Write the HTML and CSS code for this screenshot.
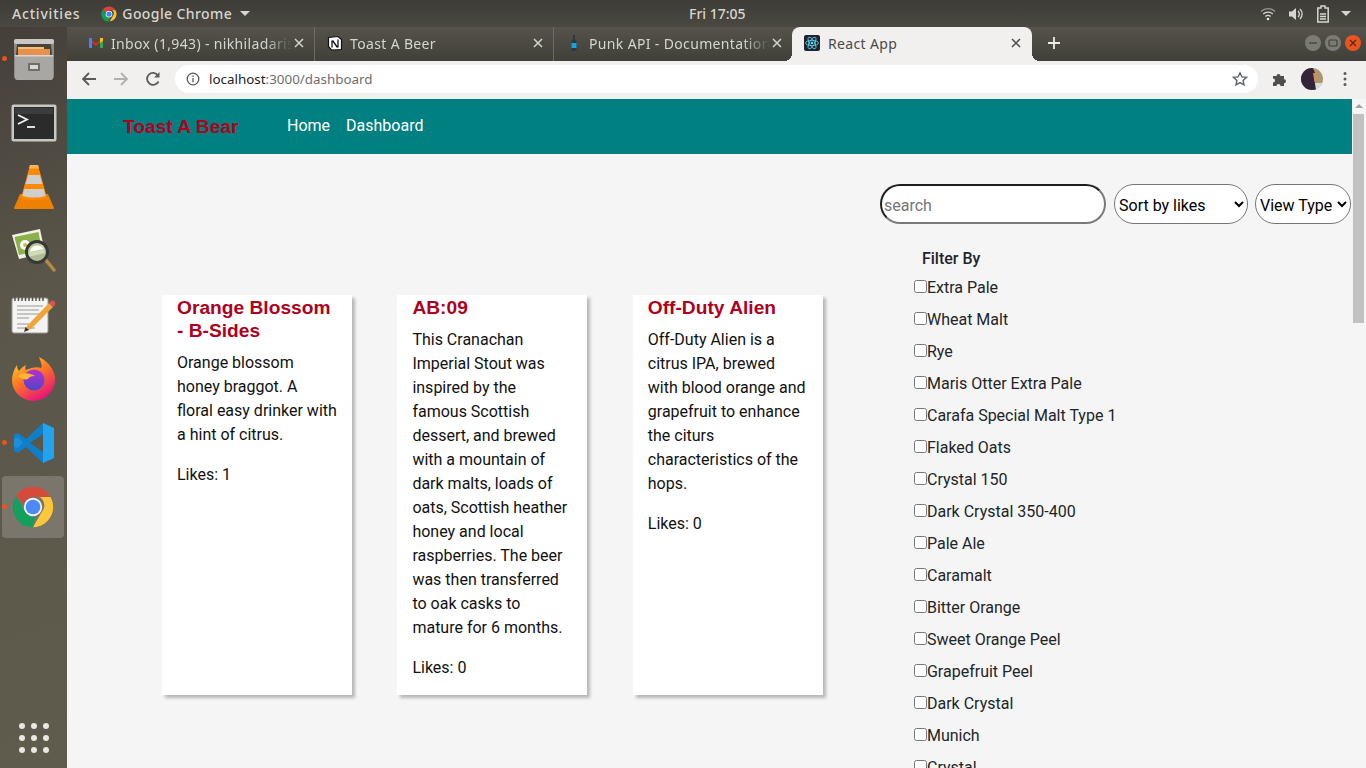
FILE: index.html
```html
<!DOCTYPE html>
<html lang="en">
<head>
  <meta charset="UTF-8">
  <title>React App</title>
  <link rel="stylesheet" href="styles.css">
</head>
<body>
  <div class="topbar">
    <span class="activities">Activities</span>
    <span class="app-menu">
      <svg width="18" height="18" viewBox="0 0 48 48"><path d="M24 4a20 20 0 0 1 17.3 10H24a10 10 0 0 0-9.6 7.2L7.6 11.9A20 20 0 0 1 24 4z" fill="#db4437"/><path d="M41.3 14A20 20 0 0 1 25.6 44l8.9-15.2A10 10 0 0 0 32 14z" fill="#fbc02d"/><path d="M7.6 11.9l8.7 15a10 10 0 0 0 11.2 6.5L22.400 44A20 20 0 0 1 7.600 11.900z" fill="#0f9d58"/><circle cx="24" cy="24" r="9" fill="#fff"/><circle cx="24" cy="24" r="7" fill="#4285f4"/></svg>
      <span class="app-name">Google Chrome</span>
      <i class="caret"></i>
    </span>
    <span class="clock">Fri 17:05</span>
    <span class="tray">
      <svg width="16" height="16" viewBox="0 0 16 16" fill="none" stroke="#d8d6cf" stroke-width="1.400"><path d="M1 5.500a10 10 0 0 1 14 0" opacity=".55"/><path d="M3.200 8a7 7 0 0 1 9.600 0"/><path d="M5.400 10.500a3.700 3.700 0 0 1 5.200 0"/><circle cx="8" cy="13" r="1.300" fill="#e8e6df" stroke="none"/></svg>
      <svg width="16" height="16" viewBox="0 0 16 16" fill="none" stroke="#d8d6cf" stroke-width="1.300"><path d="M1 5.500h3L8 2v12l-4-3.500H1z" fill="#d8d6cf" stroke="none"/><path d="M10 5a4 4 0 0 1 0 6"/><path d="M12 3a7 7 0 0 1 0 10"/></svg>
      <svg width="14" height="18" viewBox="0 0 14 18" fill="none" stroke="#d8d6cf" stroke-width="1.500"><path d="M5 1h4v2h3.200v14H1.800V3H5z"/><path d="M4 9h6M4 11.500h6M4 14h6" stroke-width="1.400"/></svg>
      <i class="caret"></i>
    </span>
  </div>

  <div class="desktop">
    <nav class="dock">
      <div class="dock-item running">
        <svg width="42" height="46" viewBox="0 0 42 46"><rect x="1" y="3" width="40" height="40" rx="3" fill="#8d8c88"/><rect x="1" y="3" width="40" height="5" rx="2" fill="#c9c8c4"/><path d="M4 8h34l1 11H3z" fill="#4b4238"/><path d="M5 13h32v6H5z" fill="#e8914a"/><path d="M5 11h26v2H5z" fill="#f3c07a"/><path d="M2 19h38v23a2 2 0 0 1-2 2H4a2 2 0 0 1-2-2z" fill="#a8a7a3"/><path d="M2 19h38v1.500H2z" fill="#d8d7d3"/><rect x="15" y="27" width="12" height="8" rx="1" fill="#6e6d69"/><rect x="17" y="29" width="8" height="4" fill="#d9d8d4"/></svg>
      </div>
      <div class="dock-item">
        <svg width="46" height="38" viewBox="0 0 46 38"><rect x="0.500" y="0.500" width="45" height="37" rx="2" fill="#c7c7c4"/><rect x="3" y="3" width="40" height="32" fill="#2b2b2b"/><rect x="4" y="4" width="38" height="6" fill="#3c3c3c"/><path d="M7 11l9 4.500-9 4.500" fill="none" stroke="#f3f3f3" stroke-width="1.800"/><path d="M16 23h8" stroke="#f3f3f3" stroke-width="1.800"/></svg>
      </div>
      <div class="dock-item">
        <svg width="40" height="46" viewBox="0 0 40 46"><path d="M6 30h28l6 14a1 1 0 0 1-1 1H1a1 1 0 0 1-1-1z" fill="#ee8200"/><path d="M16 1h8l9 33q-13 4-26 0z" fill="#ff8a00"/><path d="M14.200 11h11.600l2.500 9H11.700z" fill="#cfcfcf"/><path d="M10.300 25h19.400l1.900 7q-11.600 3-23.200 0z" fill="#cfcfcf"/><path d="M16 1h8l1 3.500H15z" fill="#ffb45c"/></svg>
      </div>
      <div class="dock-item">
        <svg width="46" height="46" viewBox="0 0 46 46"><path d="M1 7L29 1l5 24-26 6z" fill="#f1f3e6"/><path d="M3.500 9L27.500 4l3.500 18-23 5z" fill="#8cb04a"/><circle cx="14" cy="17" r="5" fill="#fff"/><circle cx="14" cy="17" r="2" fill="#d7b73c"/><path d="M34 31l9 11" stroke="#b58a45" stroke-width="3.500" stroke-linecap="round"/><circle cx="26" cy="24" r="10.500" fill="#c9d6a8" fill-opacity=".8" stroke="#36393a" stroke-width="3"/><path d="M19 24a7 7 0 0 1 13-3z" fill="#fff"/></svg>
      </div>
      <div class="dock-item">
        <svg width="46" height="38" viewBox="0 0 46 38"><rect x="1" y="2" width="36" height="35" rx="2" fill="#f4f4f2" stroke="#9b9a96"/><path d="M4 0v5M7.500 0v5M11 0v5M14.500 0v5M18 0v5M21.500 0v5M25 0v5M28.500 0v5M32 0v5" stroke="#55544f" stroke-width="1.500"/><path d="M6 10h26M6 14h22M6 18h24M6 22h12M6 28h12M6 32h18" stroke="#b8b7b3" stroke-width="1.300"/><path d="M16 30L38 7l4 4-22 22-6 2z" fill="#f2a33a"/><path d="M38 7l2-2q2-1 3.500.5t.5 3.500l-2 2z" fill="#d9534f"/><path d="M13 36l1.500-5 3.500 3z" fill="#333"/></svg>
      </div>
      <div class="dock-item">
        <svg width="44" height="46" viewBox="0 0 44 46"><defs><linearGradient id="fox" x1="0" y1="0" x2="0.600" y2="1"><stop offset="0" stop-color="#ffdd33"/><stop offset=".5" stop-color="#ff7a22"/><stop offset="1" stop-color="#e8157a"/></linearGradient><linearGradient id="fox2" x1="0" y1="0" x2="0" y2="1"><stop offset="0" stop-color="#b62fd1"/><stop offset="1" stop-color="#4f46c8"/></linearGradient></defs><path d="M27 1c6 3 14 9 16 20a22 22 0 0 1-21 24C9 45 0 35 0 24c0-5 2-11 5-15 0 3 1 5 2 6 2-3 5-5 7-6-1 2-1 4 0 5 4-2 11-4 15-2C31 9 28 5 27 1z" fill="url(#fox)"/><circle cx="22" cy="24" r="10.500" fill="url(#fox2)"/><path d="M6 20c5-4 12-3 17 0-4 0-6 1-7 3-3 1-7 0-10-3z" fill="#ffb52e"/></svg>
      </div>
      <div class="dock-item running">
        <svg width="42" height="42" viewBox="0 0 42 42"><path d="M30 1l11 5v30l-11 5-17-16-8 6-4-2v-16l4-2 8 6z" fill="#0e7fc8"/><path d="M30 1l11 5v30l-11 5z" fill="#23a3ee"/><path d="M30 12L17 21l13 9z" fill="#5a5749"/><path d="M5 15l-4 2 0 8 4 1 5-5z" fill="#1b8fd8"/></svg>
      </div>
      <div class="dock-item active running">
        <svg width="44" height="44" viewBox="0 0 48 48"><path d="M24 2a22 22 0 0 1 19 11H24a11 11 0 0 0-10.500 7.800L5.500 12A22 22 0 0 1 24 2z" fill="#d64a3a"/><path d="M43 13A22 22 0 0 1 24 46l9.500-16.500A11 11 0 0 0 31.500 13z" fill="#fcc73a"/><path d="M5.500 12l9 15.600a11 11 0 0 0 11.800 7L24 46A22 22 0 0 1 5.500 12z" fill="#12a05c"/><circle cx="24" cy="24" r="10" fill="#f1f3f4"/><circle cx="24" cy="24" r="8" fill="#4c8bf5"/></svg>
      </div>
      <div class="app-grid">
        <i></i><i></i><i></i><i></i><i></i><i></i><i></i><i></i><i></i>
      </div>
    </nav>

    <div class="browser">
      <div class="tabstrip">
        <div class="tab">
          <svg class="favicon" width="16" height="16" viewBox="0 0 16 16"><path d="M1 3l7 5.500L15 3v10h-3V7.500L8 11 4 7.500V13H1z" fill="#d93025"/><path d="M1 3h3v10H1z" fill="#4285f4"/><path d="M12 3h3v10h-3z" fill="#34a853"/><path d="M12 3l3 0v3l-3 2z" fill="#fbbc04"/></svg>
          <span class="tab-title">Inbox (1,943) - nikhiladaris</span>
          <svg class="tab-close" width="14" height="14" viewBox="0 0 14 14"><path d="M3 3l8 8M11 3l-8 8" stroke="currentColor" stroke-width="1.500"/></svg>
        </div>
        <div class="tab">
          <svg class="favicon" width="16" height="16" viewBox="0 0 16 16"><path d="M1.500 2.500L11 1.500l3.500 3v10l-10 .5-3-3.500z" fill="#fff" stroke="#111" stroke-width="1.200"/><path d="M5 5.500v7M5.500 5.500l5 7M11 4.500v8" stroke="#111" stroke-width="1.300" fill="none"/></svg>
          <span class="tab-title">Toast A Beer</span>
          <svg class="tab-close" width="14" height="14" viewBox="0 0 14 14"><path d="M3 3l8 8M11 3l-8 8" stroke="currentColor" stroke-width="1.500"/></svg>
        </div>
        <div class="tab">
          <svg class="favicon" width="16" height="16" viewBox="0 0 16 16"><path d="M7 0h2v4l1.500 2v10h-5V6L7 4z" fill="#2c3a40"/><path d="M5.500 8h5v5h-5z" fill="#10a5dd"/></svg>
          <span class="tab-title">Punk API - Documentation</span>
          <svg class="tab-close" width="14" height="14" viewBox="0 0 14 14"><path d="M3 3l8 8M11 3l-8 8" stroke="currentColor" stroke-width="1.500"/></svg>
        </div>
        <div class="tab tab-active">
          <svg class="favicon" width="16" height="16" viewBox="0 0 16 16"><rect width="16" height="16" rx="2" fill="#20232a"/><g fill="none" stroke="#61dafb" stroke-width=".8"><ellipse cx="8" cy="8" rx="6.500" ry="2.600"/><ellipse cx="8" cy="8" rx="6.500" ry="2.600" transform="rotate(60 8 8)"/><ellipse cx="8" cy="8" rx="6.500" ry="2.600" transform="rotate(120 8 8)"/></g><circle cx="8" cy="8" r="1.300" fill="#61dafb"/></svg>
          <span class="tab-title">React App</span>
          <svg class="tab-close" width="14" height="14" viewBox="0 0 14 14"><path d="M3 3l8 8M11 3l-8 8" stroke="currentColor" stroke-width="1.500"/></svg>
        </div>
        <svg class="new-tab" width="14" height="14" viewBox="0 0 14 14"><path d="M7 1v12M1 7h12" stroke="#eeece6" stroke-width="1.800"/></svg>
        <div class="window-buttons">
          <span class="win-btn"><svg width="10" height="10" viewBox="0 0 10 10"><path d="M1 5h8" stroke="#3d3c37" stroke-width="1.200"/></svg></span>
          <span class="win-btn"><svg width="10" height="10" viewBox="0 0 10 10"><rect x="1" y="2" width="8" height="6" rx="1" fill="none" stroke="#3d3c37" stroke-width="1.100"/></svg></span>
          <span class="win-btn win-close"><svg width="10" height="10" viewBox="0 0 10 10"><path d="M2 2l6 6M8 2l-6 6" stroke="#5d2410" stroke-width="1.200"/></svg></span>
        </div>
      </div>

      <div class="toolbar">
        <svg class="tool" width="16" height="16" viewBox="0 0 16 16" fill="none" stroke="#5a5a5a" stroke-width="1.800"><path d="M15 8H2M8 2L2 8l6 6"/></svg>
        <svg class="tool" width="16" height="16" viewBox="0 0 16 16" fill="none" stroke="#b0b0b0" stroke-width="1.800"><path d="M1 8h13M8 2l6 6-6 6"/></svg>
        <svg class="tool" width="16" height="16" viewBox="0 0 16 16" fill="none" stroke="#5a5a5a" stroke-width="1.800"><path d="M13.500 10.500A6 6 0 1 1 13 4.500"/><path d="M14.500 1v5.500H9z" fill="#5a5a5a" stroke="none"/></svg>
        <div class="omnibox">
          <svg width="14" height="14" viewBox="0 0 14 14" fill="none" stroke="#5a5a5a" stroke-width="1.300"><circle cx="7" cy="7" r="5.800"/><path d="M7 6v4.200M7 3.500v1.400"/></svg>
          <span class="url"><b>localhost</b>:3000/dashboard</span>
          <svg class="star" width="16" height="16" viewBox="0 0 16 16"><path d="M8 1.800l1.900 4.100 4.500.5-3.300 3 .9 4.500L8 11.600l-4 2.300.9-4.500-3.300-3 4.500-.5z" fill="none" stroke="#5f6368" stroke-width="1.400"/></svg>
        </div>
        <svg class="puzzle" width="16" height="16" viewBox="0 0 16 16"><path d="M1 5h3.500a2 2 0 1 1 4 0H12v3.300a2 2 0 1 1 0 4V15H8.500a2 2 0 1 0-4 0H1v-3.500a2 2 0 1 0 0-4z" fill="#4f4f4f"/></svg>
        <svg class="avatar" width="22" height="22" viewBox="0 0 22 22"><defs><clipPath id="round"><circle cx="11" cy="11" r="11"/></clipPath></defs><g clip-path="url(#round)"><rect width="22" height="22" fill="#a89a6c"/><path d="M0 0h12l2 5-1 7 3 10H0z" fill="#33243a"/><path d="M12 5h4l1 6-3 3-1-3z" fill="#c98f62"/><path d="M14 15h8v7h-7z" fill="#d8dcd8"/></g></svg>
        <svg class="menu-dots" width="4" height="16" viewBox="0 0 4 16" fill="#5a5a5a"><circle cx="2" cy="2.500" r="1.500"/><circle cx="2" cy="8" r="1.500"/><circle cx="2" cy="13.500" r="1.500"/></svg>
      </div>

      <div class="viewport">
        <div class="page">
          <header class="navbar">
            <span class="brand">Toast A Bear</span>
            <a class="nav-link">Home</a>
            <a class="nav-link">Dashboard</a>
          </header>
          <div class="controls">
            <input class="search" type="text" placeholder="search">
            <select class="pill sort"><option>Sort by likes</option></select>
            <select class="pill view"><option>View Type</option></select>
          </div>
          <div class="content">
            <section class="cards">
              <article class="card">
                <h2>Orange Blossom - B-Sides</h2>
                <p>Orange blossom honey braggot. A floral easy drinker with a hint of citrus.</p>
                <p>Likes: 1</p>
              </article>
              <article class="card">
                <h2>AB:09</h2>
                <p>This Cranachan Imperial Stout was inspired by the famous Scottish dessert, and brewed with a mountain of dark malts, loads of oats, Scottish heather honey and local raspberries. The beer was then transferred to oak casks to mature for 6 months.</p>
                <p>Likes: 0</p>
              </article>
              <article class="card">
                <h2>Off-Duty Alien</h2>
                <p>Off-Duty Alien is a citrus IPA, brewed with blood orange and grapefruit to enhance the citurs characteristics of the hops.</p>
                <p>Likes: 0</p>
              </article>
            </section>
            <aside class="filters">
              <h3>Filter By</h3>
              <label><input type="checkbox">Extra Pale</label>
              <label><input type="checkbox">Wheat Malt</label>
              <label><input type="checkbox">Rye</label>
              <label><input type="checkbox">Maris Otter Extra Pale</label>
              <label><input type="checkbox">Carafa Special Malt Type 1</label>
              <label><input type="checkbox">Flaked Oats</label>
              <label><input type="checkbox">Crystal 150</label>
              <label><input type="checkbox">Dark Crystal 350-400</label>
              <label><input type="checkbox">Pale Ale</label>
              <label><input type="checkbox">Caramalt</label>
              <label><input type="checkbox">Bitter Orange</label>
              <label><input type="checkbox">Sweet Orange Peel</label>
              <label><input type="checkbox">Grapefruit Peel</label>
              <label><input type="checkbox">Dark Crystal</label>
              <label><input type="checkbox">Munich</label>
              <label><input type="checkbox">Crystal</label>
            </aside>
          </div>
        </div>
        <div class="scrollbar">
          <i class="scroll-up"></i>
          <div class="scroll-thumb"></div>
        </div>
      </div>
    </div>
  </div>
</body>
</html>
```

FILE: styles.css
```css
* {
  box-sizing: border-box;
}

html, body {
  height: 768px;
  overflow: hidden;
}

body {
  margin: 0;
  display: flex;
  flex-direction: column;
  font-family: "Noto Sans", sans-serif;
  background-color: #f5f5f5;
}

/* ubuntu top bar */
.topbar {
  height: 27px;
  flex: none;
  display: flex;
  align-items: center;
  position: relative;
  padding: 0 15px 0 12px;
  background: linear-gradient(#3d3c37, #4a4841);
  color: #d8d6cf;
  font-size: 14px;
  font-weight: 500;
}

.activities {
  margin-right: 20px;
  letter-spacing: 0.8px;
}

.app-menu {
  display: flex;
  align-items: center;
  gap: 4px;
}

.app-name {
  letter-spacing: 0.4px;
}

.caret {
  display: inline-block;
  width: 0;
  height: 0;
  margin-left: 4px;
  border-left: 5px solid transparent;
  border-right: 5px solid transparent;
  border-top: 5px solid #d8d6cf;
}

.clock {
  position: absolute;
  left: 689px;
  top: 4px;
}

.tray {
  margin-left: auto;
  display: flex;
  align-items: center;
  gap: 12px;
}

.tray .caret {
  margin-left: -1px;
}

/* dock */
.desktop {
  flex: 1;
  display: flex;
  min-height: 0;
}

.dock {
  width: 67px;
  flex: none;
  display: flex;
  flex-direction: column;
  background: linear-gradient(160deg, #453f3a, #5a5649 35%, #5f5b4d);
}

.dock-item {
  height: 64px;
  flex: none;
  display: flex;
  align-items: center;
  justify-content: center;
  position: relative;
  padding-left: 0;
}

.dock-item.running::before {
  content: "";
  position: absolute;
  left: 2px;
  top: 29px;
  width: 5px;
  height: 5px;
  border-radius: 50%;
  background-color: #e95420;
}

.dock-item.active {
  background-color: #7a766c;
  margin: 1px 3px 1px 2px;
  height: 62px;
  border-radius: 4px;
}

.dock-item.active::before {
  left: 0;
  top: 28px;
}

.app-grid {
  margin: auto 0 15px;
  align-self: center;
  display: grid;
  grid-template-columns: repeat(3, 6px);
  gap: 6px;
}

.app-grid i {
  height: 6px;
  border-radius: 50%;
  background-color: #e8e7e3;
}

/* chrome */
.browser {
  flex: 1;
  min-width: 0;
  display: flex;
  flex-direction: column;
}

.tabstrip {
  height: 34px;
  flex: none;
  display: flex;
  align-items: stretch;
  padding-left: 9px;
  background: linear-gradient(#55534b, #403f39);
}

.tab {
  width: 239px;
  flex: none;
  display: flex;
  align-items: center;
  padding: 0 8px 2px 12px;
  color: #d6d5d0;
  font-size: 14px;
  letter-spacing: 0.35px;
  border-right: 1px solid #6d6b63;
}

.tab:nth-child(3) {
  border-right-color: transparent;
}

.tab-active {
  width: 240px;
  margin-left: -1px;
  padding-right: 9px;
  position: relative;
  color: #4a4a48;
  background-color: #f1f0ee;
  border-right: 0;
  border-radius: 8px 8px 0 0;
}

.tab-active::before,
.tab-active::after {
  content: "";
  position: absolute;
  bottom: 0;
  width: 8px;
  height: 8px;
}

.tab-active::before {
  left: -8px;
  background: radial-gradient(circle at 0 0, transparent 8px, #f1f0ee 8px);
}

.tab-active::after {
  right: -8px;
  background: radial-gradient(circle at 100% 0, transparent 8px, #f1f0ee 8px);
}

.favicon {
  flex: none;
  margin-right: 7px;
}

.tab-active .favicon {
  margin-right: 8px;
}

.tab-title {
  flex: 1;
  min-width: 0;
  white-space: nowrap;
  overflow: hidden;
  -webkit-mask-image: linear-gradient(90deg, #000 85%, transparent);
  mask-image: linear-gradient(90deg, #000 85%, transparent);
}

.tab-active .tab-title {
  -webkit-mask-image: none;
  mask-image: none;
}

.tab-close {
  flex: none;
}

.new-tab {
  align-self: center;
  margin-left: 15px;
  margin-bottom: 2px;
}

.window-buttons {
  margin-left: auto;
  display: flex;
  align-items: center;
  gap: 4px;
  padding: 0 5px 2px 0;
}

.win-btn {
  width: 16px;
  height: 16px;
  display: flex;
  align-items: center;
  justify-content: center;
  border-radius: 50%;
  background-color: #7c7b73;
}

.win-close {
  background-color: #ea5420;
}

.toolbar {
  height: 38px;
  flex: none;
  display: flex;
  align-items: center;
  padding: 0 0 2px 14px;
  background-color: #f1f0ee;
}

.tool {
  margin-right: 16px;
}

.omnibox {
  width: 1083px;
  height: 28px;
  margin-left: -2px;
  display: flex;
  align-items: center;
  gap: 9px;
  padding: 0 10px 0 11px;
  background-color: #fff;
  border-radius: 14px;
}

.url {
  flex: 1;
  font-size: 13.400px;
  color: #6e6e6e;
}

.url b {
  font-weight: 400;
  color: #222;
}

.puzzle {
  margin-left: 14px;
}

.avatar {
  margin-left: 13px;
}

.menu-dots {
  margin-left: 20px;
}

/* page */
.viewport {
  flex: 1;
  min-height: 0;
  display: flex;
}

.page {
  flex: 1;
  min-width: 0;
  font-family: Roboto, sans-serif;
  font-size: 16px;
  color: #212529;
  background-color: #f5f5f5;
}

.navbar {
  height: 55px;
  display: flex;
  align-items: center;
  gap: 16px;
  padding-left: 56px;
  padding-bottom: 3px;
  background-color: #008080;
}

.brand {
  width: 148px;
  padding-top: 3px;
  font-family: "Liberation Sans", sans-serif;
  font-size: 19.200px;
  font-weight: bold;
  color: #b00020;
}

.nav-link {
  color: #fff;
}

.controls {
  display: flex;
  justify-content: flex-end;
  align-items: center;
  gap: 8px;
  margin-top: 30px;
  padding-right: 1px;
}

.search {
  width: 226px;
  height: 40px;
  padding: 2px 2px 0;
  font-family: Roboto, sans-serif;
  font-size: 16px;
  background-color: #fff;
  border: 2px solid;
  border-color: #1f1f1f #7a7a7a #7a7a7a #1f1f1f;
  border-radius: 20px;
}

.pill {
  height: 40px;
  padding-top: 2px;
  font-family: Roboto, sans-serif;
  font-size: 16px;
  color: #000;
  background-color: #fff;
  border: 1px solid #767676;
  border-radius: 20px;
}

.sort {
  width: 134px;
}

.view {
  width: 96px;
  margin-left: -1px;
}

.content {
  display: flex;
  align-items: flex-start;
  padding-left: 95px;
}

.cards {
  display: flex;
  gap: 45.400px;
  margin-top: 71px;
}

.card {
  width: 190px;
  height: 400px;
  padding: 1px 15px 0;
  background-color: #fff;
  box-shadow: 3px 3px 3px rgba(0, 0, 0, 0.25);
  color: #111;
  line-height: 24px;
}

.card h2 {
  margin: 0 0 9px;
  font-family: "Liberation Sans", sans-serif;
  font-size: 19.200px;
  line-height: 23px;
  font-weight: bold;
  color: #b00020;
}

.card p {
  margin: 0 0 16px;
}

.filters {
  margin-left: 91.200px;
  margin-top: 23px;
  font-size: 16px;
}

.filters h3 {
  margin: 0 0 4px 8px;
  font-size: 16px;
  line-height: 24px;
  font-weight: 500;
}

.filters label {
  display: block;
  height: 32px;
  line-height: 26px;
  white-space: nowrap;
}

.filters input {
  width: 13px;
  height: 13px;
  margin: 0;
  vertical-align: 0;
}

.scrollbar {
  width: 14px;
  flex: none;
  display: flex;
  flex-direction: column;
  align-items: center;
  padding: 5px 2px 0 1px;
  background-color: #f5f5f5;
}

.scroll-up {
  width: 0;
  height: 0;
  border-left: 4px solid transparent;
  border-right: 4px solid transparent;
  border-bottom: 4px solid #a3a3a3;
}

.scroll-thumb {
  width: 100%;
  height: 209px;
  margin-top: 6px;
  background-color: #c1c1c1;
}
```
